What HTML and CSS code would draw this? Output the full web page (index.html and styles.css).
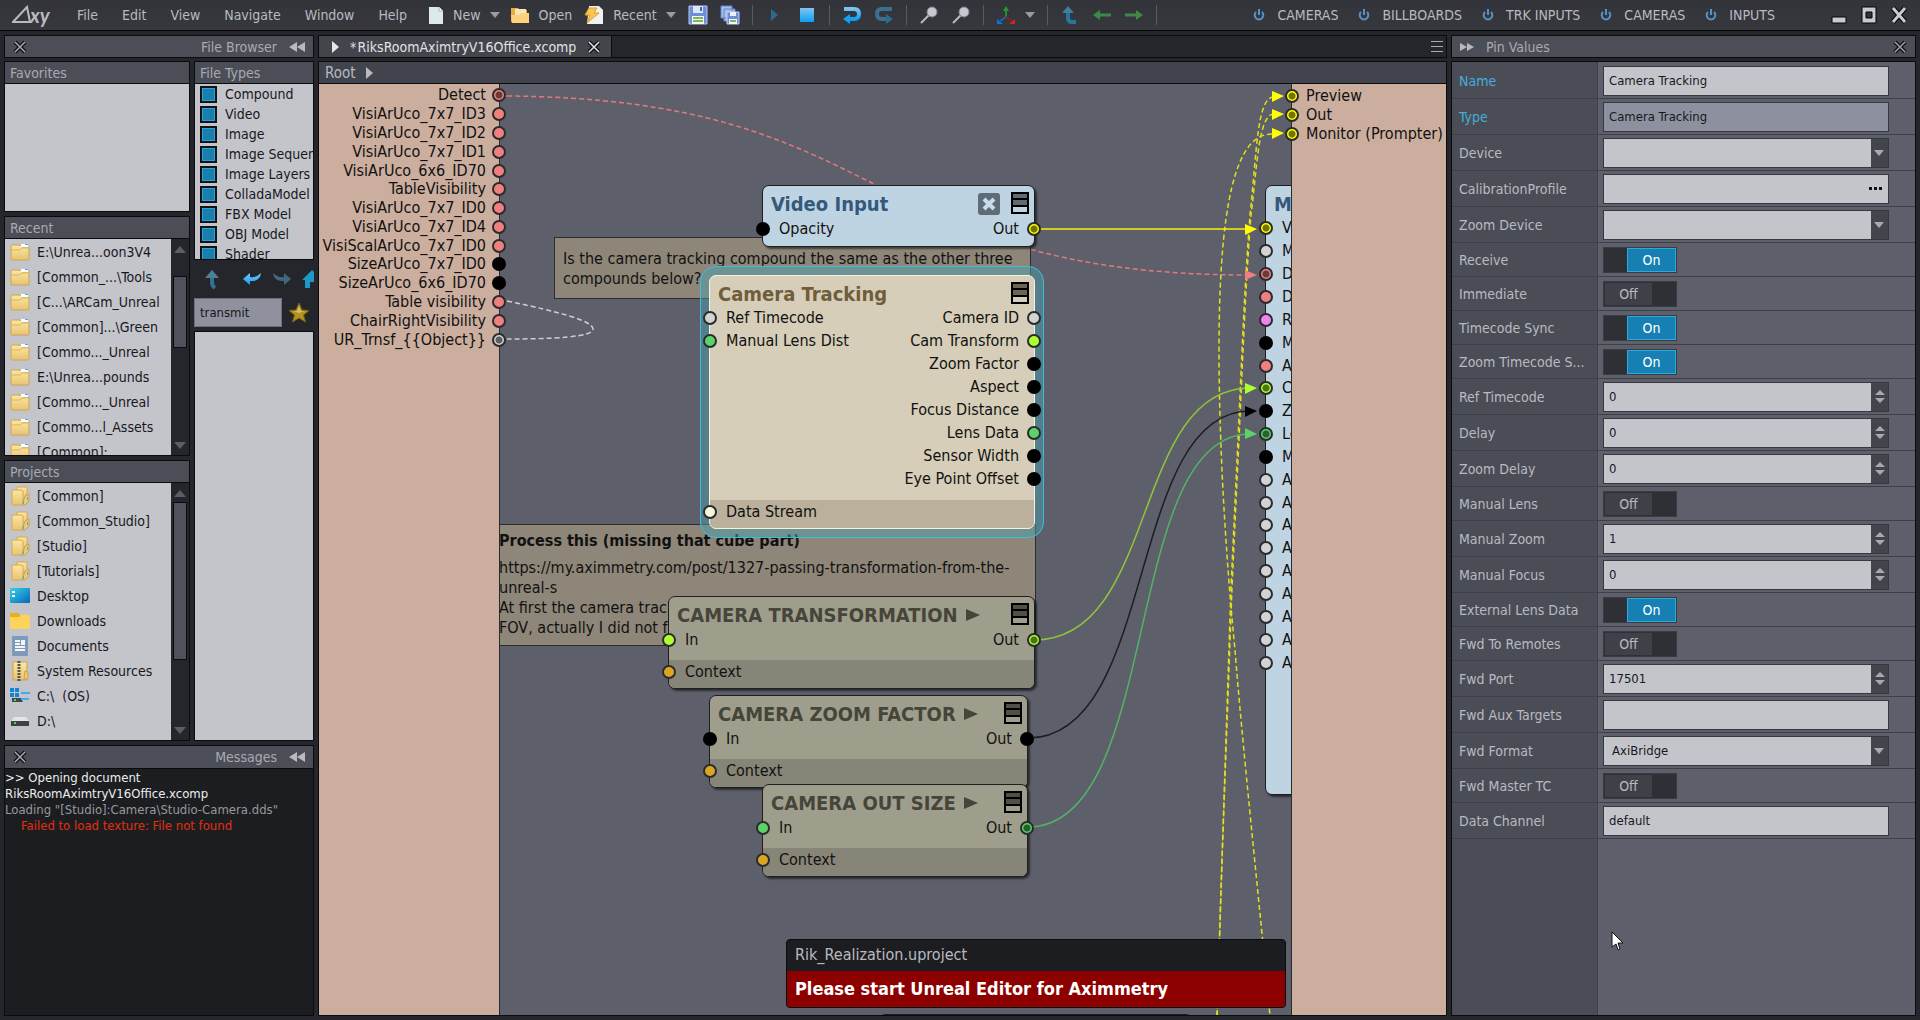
FILE: index.html
```html
<!DOCTYPE html>
<html lang="en">
<head>
<meta charset="utf-8">
<title>RiksRoomAximtryV16Office.xcomp</title>
<link rel="stylesheet" href="styles.css">
</head>
<body>
<svg class="defs" aria-hidden="true">
  <defs>
    <linearGradient id="gold" x1="0" y1="0" x2="0" y2="1"><stop offset="0" stop-color="#fbe7a0"/><stop offset="1" stop-color="#e8c374"/></linearGradient>
    <linearGradient id="blue" x1="0" y1="0" x2="0" y2="1"><stop offset="0" stop-color="#7fc4f2"/><stop offset="1" stop-color="#0ba0f4"/></linearGradient>
    <linearGradient id="desk" x1="0" y1="0" x2="1" y2="1"><stop offset="0" stop-color="#35d3e8"/><stop offset="1" stop-color="#0866bb"/></linearGradient>
  </defs>
  <symbol id="folder" viewBox="0 0 20 18"><path d="M1 3q0-1 1-1h8l2 2h6q1 0 1 1v11q0 1-1 1H2q-1 0-1-1z" fill="url(#gold)" stroke="#cda453"/><path d="M11 1h7v3h-7z" fill="#fff"/><path d="M15 1h3v1h-3z" fill="#37b7e0"/><path d="M1 7h9l2-2h7" fill="none" stroke="#d9b566"/></symbol>
  <symbol id="folders" viewBox="0 0 20 20"><path d="M7 1h10v12H7z" fill="url(#gold)" stroke="#d6a850"/><path d="M2 4h9l2 1v13l-2 1H2z" fill="url(#gold)" stroke="#d6a850"/><path d="M15 10l4-2v7l-4 4h-3z" fill="#ecc877" stroke="#cfa14a"/><path d="M17 11h1v3h-1zM13 15h1v3h-1z" fill="#3cb8dd"/></symbol>
  <symbol id="power" viewBox="0 0 12 14"><path d="M3 4a4.300 4.300 0 1 0 6 0M6 1v6" fill="none" stroke="#5592c8" stroke-width="2"/></symbol>
  <symbol id="menuicon" viewBox="0 0 18 22"><path d="M1 1h16v13H1z" fill="currentColor"/><path d="M1 1h16v20H1zM1 7h16M1 14h16" fill="none" stroke="#000" stroke-width="2"/></symbol>
  <symbol id="cross" viewBox="0 0 14 14"><path d="M2 2l10 10M12 2L2 12" stroke="#101114" stroke-width="4"/><path d="M2 2l10 10M12 2L2 12" stroke="currentColor" stroke-width="1.500"/></symbol>
  <symbol id="lens" viewBox="0 0 20 20"><path d="M2 18l8-8" stroke="#b9bbc0" stroke-width="2"/><circle cx="13" cy="7" r="5" fill="#c3c9d3" stroke="#7d828c"/></symbol>
</svg>

<header class="topbar">
  <span class="logo"><svg width="20" height="20" viewBox="0 0 20 20"><path d="M1 17L15 2l3 15z" fill="none" stroke="#b9bac0" stroke-width="2"/></svg><i>xy</i></span>
  <nav class="menus"><button>File</button><button>Edit</button><button>View</button><button>Navigate</button><button>Window</button><button>Help</button></nav>
  <div class="tools">
    <button class="tool new"><svg width="16" height="19" viewBox="0 0 16 19"><path d="M1 1h10l4 4v13H1z" fill="#dcebea"/><path d="M11 1v4h4" fill="#fff" stroke="#9fb8b5"/></svg>New<b class="tri"></b></button>
    <button class="tool open"><svg width="20" height="18" viewBox="0 0 20 18"><path d="M1 2h7l2 2h7v12H1z" fill="#e9aa44"/><path d="M5 3h11v8H5z" fill="#f6e6bb"/><path d="M1 9h8l2-2h8v10H2z" fill="#fcd27c"/></svg>Open</button>
    <button class="tool recent"><svg width="20" height="20" viewBox="0 0 20 20"><path d="M5 1h10l4 4v14H3z" fill="#f1f1ee"/><path d="M5 3h8l-3 5h5L3 18l3-8H1z" fill="#f7c653" stroke="#de9f2a"/></svg>Recent<b class="tri"></b></button>
    <button class="tool save" aria-label="Save"><svg width="20" height="20" viewBox="0 0 20 20"><path d="M1 1h18v18H1z" fill="#6a8fdc" stroke="#b7c9f3"/><path d="M5 1h10v7H5z" fill="#dfe7f7"/><path d="M12 2h2v4h-2z" fill="#4366b5"/><path d="M4 11h12v8H4z" fill="#f4f8f4"/><path d="M5 13h10M5 16h10" stroke="#7cb95a" stroke-width="2"/></svg></button>
    <button class="tool saveall" aria-label="Save all"><svg width="20" height="20" viewBox="0 0 20 20"><path d="M1 1h11v12H1zM4 4h11v12H4z" fill="#a9c0ec" stroke="#6384c4"/><path d="M7 7h12v12H7z" fill="#6a8fdc" stroke="#c4d2f4"/><path d="M10 7h6v4h-6z" fill="#eef"/><path d="M9 14h8v5H9z" fill="#f4f8f4"/><path d="M10 16h6" stroke="#7cb95a" stroke-width="2"/></svg></button>
    <i class="sep"></i>
    <button class="tool" aria-label="Play"><svg width="20" height="16" viewBox="0 0 20 16"><path d="M6 2l7 6-7 6z" fill="#2b6a94"/></svg></button>
    <button class="tool" aria-label="Stop"><svg width="20" height="16" viewBox="0 0 20 16"><path d="M3 1h14v14H3z" fill="url(#blue)"/></svg></button>
    <i class="sep"></i>
    <button class="tool" aria-label="Undo"><svg width="20" height="18" viewBox="0 0 20 18"><path d="M2 3h10q5 0 5 5t-5 5H7" fill="none" stroke="url(#blue)" stroke-width="4"/><path d="M1 13l7-5v10z" fill="#12a2f2"/></svg></button>
    <button class="tool" aria-label="Redo"><svg width="20" height="18" viewBox="0 0 20 18"><path d="M18 3H8Q3 3 3 8t5 5h5" fill="none" stroke="#3d6f90" stroke-width="4"/><path d="M19 13l-7-5v10z" fill="#2d6c92"/></svg></button>
    <i class="sep"></i>
    <button class="tool" aria-label="Zoom in"><svg width="20" height="20"><use href="#lens"/></svg></button>
    <button class="tool" aria-label="Zoom out"><svg width="20" height="20"><use href="#lens"/></svg></button>
    <i class="sep"></i>
    <button class="tool axis" aria-label="Axes"><svg width="20" height="20" viewBox="0 0 20 20"><path d="M10 12V5" stroke="#1c8f2d" stroke-width="2"/><path d="M7 6l3-5 3 5z" fill="#1f9c31"/><path d="M10 12l-6 4" stroke="#1b63b8" stroke-width="2"/><path d="M1 14v5h6z" fill="#0f75cf"/><path d="M10 12l6 4" stroke="#8a2028" stroke-width="2"/><path d="M19 14v5h-6z" fill="#d3202c"/></svg><b class="tri"></b></button>
    <i class="sep"></i>
    <button class="tool" aria-label="Up"><svg width="20" height="20" viewBox="0 0 20 20"><path d="M8 6v7q0 4 4 4h4" fill="none" stroke="#25759d" stroke-width="4"/><path d="M2 8l6-7 6 7z" fill="#3f7f9f"/></svg></button>
    <button class="tool" aria-label="Back"><svg width="20" height="16" viewBox="0 0 20 16"><path d="M19 8H7" stroke="#3c8a46" stroke-width="3"/><path d="M1 8l7-5v10z" fill="#3c8a46"/></svg></button>
    <button class="tool" aria-label="Forward"><svg width="20" height="16" viewBox="0 0 20 16"><path d="M1 8h12" stroke="#3c8a46" stroke-width="3"/><path d="M19 8l-7-5v10z" fill="#3c8a46"/></svg></button>
    <i class="sep"></i>
  </div>
  <div class="shortcuts">
    <button><svg width="12" height="14"><use href="#power"/></svg>CAMERAS</button>
    <button><svg width="12" height="14"><use href="#power"/></svg>BILLBOARDS</button>
    <button><svg width="12" height="14"><use href="#power"/></svg>TRK INPUTS</button>
    <button><svg width="12" height="14"><use href="#power"/></svg>CAMERAS</button>
    <button><svg width="12" height="14"><use href="#power"/></svg>INPUTS</button>
  </div>
  <div class="winctl">
    <button aria-label="Minimize"><svg width="16" height="18" viewBox="0 0 16 18"><path d="M1 11h14v6H1z" fill="#c9cacd" stroke="#050505"/></svg></button>
    <button aria-label="Maximize"><svg width="16" height="18" viewBox="0 0 16 18"><path d="M1 1h14v16H1z" fill="#c9cacd" stroke="#050505"/><path d="M5 6h6v6H5z" fill="#333" stroke="#050505"/></svg></button>
    <button aria-label="Close"><svg width="16" height="18" viewBox="0 0 16 18"><path d="M2 2l12 14M14 2L2 16" stroke="#050505" stroke-width="5"/><path d="M2 2l12 14M14 2L2 16" stroke="#c9cacd" stroke-width="3"/></svg></button>
  </div>
</header>

<main class="workspace">
  <aside class="dock left">
    <div class="bar"><svg width="14" height="14"><use href="#cross"/></svg><span class="push">File Browser</span><svg class="chev" width="16" height="10" viewBox="0 0 16 10"><path d="M8 0v10L0 5zM16 0v10L8 5z" fill="#b9bac0"/></svg></div>
    <div class="files">
      <div class="col">
        <section class="panel"><h2>Favorites</h2><div class="list"></div></section>
        <section class="panel"><h2>Recent</h2>
          <div class="scroller"><ul class="list">
            <li><svg width="20" height="18"><use href="#folder"/></svg>E:\Unrea...oon3V4</li>
            <li><svg width="20" height="18"><use href="#folder"/></svg>[Common_...\Tools</li>
            <li><svg width="20" height="18"><use href="#folder"/></svg>[C...\ARCam_Unreal</li>
            <li><svg width="20" height="18"><use href="#folder"/></svg>[Common]...\Green</li>
            <li><svg width="20" height="18"><use href="#folder"/></svg>[Commo..._Unreal</li>
            <li><svg width="20" height="18"><use href="#folder"/></svg>E:\Unrea...pounds</li>
            <li><svg width="20" height="18"><use href="#folder"/></svg>[Commo..._Unreal</li>
            <li><svg width="20" height="18"><use href="#folder"/></svg>[Commo...l_Assets</li>
            <li><svg width="20" height="18"><use href="#folder"/></svg>[Common]:</li>
          </ul><div class="track recent-track"><b class="up"></b><i></i><b class="down"></b></div></div>
        </section>
        <section class="panel"><h2>Projects</h2>
          <div class="scroller"><ul class="list">
            <li><svg width="20" height="20"><use href="#folders"/></svg>[Common]</li>
            <li><svg width="20" height="20"><use href="#folders"/></svg>[Common_Studio]</li>
            <li><svg width="20" height="20"><use href="#folders"/></svg>[Studio]</li>
            <li><svg width="20" height="20"><use href="#folders"/></svg>[Tutorials]</li>
            <li><svg width="20" height="16" viewBox="0 0 20 16"><rect width="20" height="15" rx="1" fill="url(#desk)"/><path d="M2 3h3v2H2zM2 7h3v2H2z" fill="#fff"/></svg>Desktop</li>
            <li><svg width="20" height="16" viewBox="0 0 20 16"><path d="M0 1q0-1 1-1h7l2 2v4H0z" fill="#f0ac12"/><path d="M0 4h9l2-2h8q1 0 1 1v12q0 1-1 1H1q-1 0-1-1z" fill="#fdd35c"/></svg>Downloads</li>
            <li><svg width="20" height="20" viewBox="0 0 20 20"><rect x="2" width="16" height="20" rx="1" fill="#7d9ab8"/><path d="M5 5h5M5 8h5M5 11h10M5 14h10" stroke="#f2f6fa" stroke-width="2"/><path d="M11 4h4v5h-4z" fill="#f2f6fa"/></svg>Documents</li>
            <li><svg width="20" height="20" viewBox="0 0 20 20"><path d="M3 1h14v18H3z" fill="url(#gold)" stroke="#cfa14a"/><path d="M9 0v20" stroke="#555" stroke-width="3" stroke-dasharray="2 1"/><path d="M15 10l3 1v7h-4z" fill="#ecc877" stroke="#cfa14a"/></svg>System Resources</li>
            <li><svg width="20" height="18" viewBox="0 0 20 18"><path d="M2 11h15v4H2z" fill="#43464a"/><path d="M0 1h4v4H0zM5 1h4v4H5zM0 6h4v4H0zM5 6h4v4H5z" fill="#1384d8"/><path d="M4 12h2v2H4z" fill="#52d552"/><path d="M11 3h8v7q-1 5-4 7-3-2-4-7z" fill="#b9c6d4"/><path d="M11 6h9M11 12h8" stroke="#4ea8e4" stroke-width="2"/></svg>C:\ &nbsp;(OS)</li>
            <li><svg width="20" height="18" viewBox="0 0 20 18"><path d="M4 5h12l3 4H1z" fill="#e3e4e6"/><path d="M1 9h18v5H1z" fill="#3e4144"/><path d="M4 10h2v2H4z" fill="#52d552"/></svg>D:\</li>
            <li><svg width="20" height="18"></svg>Libraries</li>
          </ul><div class="track proj-track"><b class="up"></b><i></i><b class="down"></b></div></div>
        </section>
      </div>
      <div class="col2">
        <section class="panel types"><h2>File Types</h2><div class="list checks">
          <label><input type="checkbox" checked>Compound</label><label><input type="checkbox" checked>Video</label><label><input type="checkbox" checked>Image</label><label><input type="checkbox" checked>Image Sequence</label><label><input type="checkbox" checked>Image Layers</label><label><input type="checkbox" checked>ColladaModel</label><label><input type="checkbox" checked>FBX Model</label><label><input type="checkbox" checked>OBJ Model</label><label><input type="checkbox" checked>Shader</label>
        </div></section>
        <div class="navicons">
          <button aria-label="Up"><svg width="20" height="20" viewBox="0 0 20 20"><path d="M10 7v6q0 4 3 6" fill="none" stroke="#2f7292" stroke-width="4"/><path d="M3 9l7-8 7 8z" fill="#4f7f97"/></svg></button>
          <button aria-label="Back"><svg width="20" height="16" viewBox="0 0 20 16"><path d="M1 8l7-6v4q6 1 11-4-1 9-11 8v4z" fill="url(#blue)"/></svg></button>
          <button aria-label="Forward"><svg width="20" height="16" viewBox="0 0 20 16"><path d="M19 8l-7-6v4Q6 7 1 2q1 9 11 8v4z" fill="#41677f"/></svg></button>
          <button aria-label="Home"><svg width="20" height="20" viewBox="0 0 20 20"><path d="M10 1L0 11h3v8h5v-6h4v6h5v-8h3z" fill="#1a9ac4"/></svg></button>
        </div>
        <div class="search"><input type="text" value="transmit" aria-label="Search"><button aria-label="Favorite"><svg width="20" height="20" viewBox="0 0 20 20"><path d="M10 0l3 7 7 .5-5.500 4.500 2 7L10 15l-6.500 4 2-7L0 7.500 7 7z" fill="#b3921e" stroke="#7c6414"/><path d="M10 3l2 5h4l-6 2-6-2h4z" fill="#d3bd6c"/></svg></button></div>
        <div class="results"></div>
      </div>
    </div>
    <section class="messages">
      <div class="bar"><svg width="14" height="14"><use href="#cross"/></svg><span class="push">Messages</span><svg class="chev" width="16" height="10" viewBox="0 0 16 10"><path d="M8 0v10L0 5zM16 0v10L8 5z" fill="#b9bac0"/></svg></div>
      <div class="log"><p>&gt;&gt; Opening document</p><p>RiksRoomAximtryV16Office.xcomp</p><p class="dim">Loading "[Studio]:Camera\Studio-Camera.dds"</p><p class="err">Failed to load texture: File not found</p></div>
    </section>
  </aside>

  <section class="center">
    <div class="tabs"><div class="tab"><b class="play"></b><span>*&#8202;RiksRoomAximtryV16Office.xcomp</span><svg width="14" height="14"><use href="#cross"/></svg></div><button class="burger" aria-label="Tabs"><i></i><i></i><i></i></button></div>
    <div class="editor">
      <div class="crumb">Root<b class="play"></b></div>
      <div class="canvas">
        <svg class="wires" width="1129" height="931" viewBox="319 84 1129 931" fill="none">
          <path d="M507 96H499C899 96 856 275 1250 275" stroke="#e07a7c" stroke-width="1.500" stroke-dasharray="5 3"/>
          <path d="M507 301C560 312 593 321 593 329S555 339 507 339" stroke="#cfcfcf" stroke-width="1.500" stroke-dasharray="5 3"/>
          <g stroke="#e0e01c" stroke-width="1.500" stroke-dasharray="5 3">
            <path d="M1274 97C1257 97 1257 150 1250 215C1244 290 1240 400 1237 460L1231 587L1222 860L1217 1016"/>
            <path d="M1274 114C1258 114 1257 170 1251 215C1245 290 1241 400 1238 460L1232 587L1222 860L1217 1016"/>
            <path d="M1272 134C1245 134 1219 170 1219 350C1219 460 1228 580 1235 650C1242 740 1258 890 1270 1016"/>
          </g>
          <path d="M1034 229H1250" stroke="#f4f400" stroke-width="1.500"/>
          <path d="M1034 640C1159 640 1131 388 1250 388" stroke="#8fc43a" stroke-width="1.500"/>
          <path d="M1028 738C1158 738 1126 411 1250 411" stroke="#1c1d20" stroke-width="1.500"/>
          <path d="M1028 827C1163 827 1121 434 1250 434" stroke="#55b166" stroke-width="1.500"/>
          <path d="M1245 224v11l12-6zM1272 91v11l12-6zM1272 109v11l12-6zM1272 128v11l12-6z" fill="#ffff00"/>
          <path d="M1245 270v10l12-5z" fill="#f08080"/><path d="M1245 383v11l12-6z" fill="#adff2f"/><path d="M1245 406v11l12-6z" fill="#000"/><path d="M1245 428v11l12-5z" fill="#5ad469"/>
        </svg>
        <div class="note note1">Is the camera tracking compound the same as the other three compounds below?</div>
        <div class="note note2"><strong>Process this (missing that cube part)</strong><p>https://my.aximmetry.com/post/1327-passing-transformation-from-the-unreal-s</p><p>At first the camera track</p><p>FOV, actually I did not f</p></div>

        <article class="node sky video"><h3>Video Input<button class="xbox" aria-label="Disable"><svg width="22" height="22" viewBox="0 0 22 22"><rect width="22" height="22" rx="3" fill="#5f6b76"/><path d="M6 6l10 10M16 6L6 16" stroke="#c8dbe8" stroke-width="4"/></svg></button><svg class="mi" width="18" height="22"><use href="#menuicon"/></svg></h3>
          <div class="pins"><div class="row"><i class="pin k"></i>Opacity<span>Out</span><i class="pin y on"></i></div></div></article>

        <article class="node sand tracking"><h3>Camera Tracking<svg class="mi" width="18" height="22"><use href="#menuicon"/></svg></h3>
          <div class="pins">
            <div class="row"><i class="pin w"></i>Ref Timecode<span>Camera ID</span><i class="pin w"></i></div>
            <div class="row"><i class="pin g"></i>Manual Lens Dist<span>Cam Transform</span><i class="pin l"></i></div>
            <div class="row"><span>Zoom Factor</span><i class="pin k"></i></div>
            <div class="row"><span>Aspect</span><i class="pin k"></i></div>
            <div class="row"><span>Focus Distance</span><i class="pin k"></i></div>
            <div class="row"><span>Lens Data</span><i class="pin g"></i></div>
            <div class="row"><span>Sensor Width</span><i class="pin k"></i></div>
            <div class="row"><span>Eye Point Offset</span><i class="pin k"></i></div>
          </div><footer class="row"><i class="pin c"></i>Data Stream</footer></article>

        <article class="node olive transf"><h3>CAMERA TRANSFORMATION<b class="play"></b><svg class="mi" width="18" height="22"><use href="#menuicon"/></svg></h3><div class="pins"><div class="row"><i class="pin l"></i>In<span>Out</span><i class="pin l on"></i></div></div><footer class="row"><i class="pin o"></i>Context</footer></article>
        <article class="node olive zoomf"><h3>CAMERA ZOOM FACTOR<b class="play"></b><svg class="mi" width="18" height="22"><use href="#menuicon"/></svg></h3><div class="pins"><div class="row"><i class="pin k"></i>In<span>Out</span><i class="pin k"></i></div></div><footer class="row"><i class="pin o"></i>Context</footer></article>
        <article class="node olive outsize"><h3>CAMERA OUT SIZE<b class="play"></b><svg class="mi" width="18" height="22"><use href="#menuicon"/></svg></h3><div class="pins"><div class="row"><i class="pin g"></i>In<span>Out</span><i class="pin g on"></i></div></div><footer class="row"><i class="pin o"></i>Context</footer></article>

        <article class="node sky mixer"><h3>Mixer</h3><div class="pins">
          <div class="row"><i class="pin y on"></i>Video</div><div class="row"><i class="pin w"></i>Mode</div><div class="row"><i class="pin r on"></i>Detect</div><div class="row"><i class="pin r"></i>Detect</div><div class="row"><i class="pin v"></i>Record</div><div class="row"><i class="pin k"></i>Mode</div><div class="row"><i class="pin r"></i>Apply</div><div class="row"><i class="pin l on"></i>Camera</div><div class="row"><i class="pin k"></i>Zoom</div><div class="row"><i class="pin g on"></i>Lens</div><div class="row"><i class="pin k"></i>Mode</div><div class="row"><i class="pin w"></i>Area</div><div class="row"><i class="pin w"></i>Area</div><div class="row"><i class="pin w"></i>Area</div><div class="row"><i class="pin w"></i>Area</div><div class="row"><i class="pin w"></i>Area</div><div class="row"><i class="pin w"></i>Area</div><div class="row"><i class="pin w"></i>Area</div><div class="row"><i class="pin w"></i>Area</div><div class="row"><i class="pin w"></i>Area</div>
        </div></article>
        <article class="node olive below"></article>

        <div class="strip inputs"><div class="pins">
          <div class="row"><span>Detect</span><i class="pin r on"></i></div><div class="row"><span>VisiArUco_7x7_ID3</span><i class="pin r"></i></div><div class="row"><span>VisiArUco_7x7_ID2</span><i class="pin r"></i></div><div class="row"><span>VisiArUco_7x7_ID1</span><i class="pin r"></i></div><div class="row"><span>VisiArUco_6x6_ID70</span><i class="pin r"></i></div><div class="row"><span>TableVisibility</span><i class="pin r"></i></div><div class="row"><span>VisiArUco_7x7_ID0</span><i class="pin r"></i></div><div class="row"><span>VisiArUco_7x7_ID4</span><i class="pin r"></i></div><div class="row"><span>VisiScalArUco_7x7_ID0</span><i class="pin r"></i></div><div class="row"><span>SizeArUco_7x7_ID0</span><i class="pin k"></i></div><div class="row"><span>SizeArUco_6x6_ID70</span><i class="pin k"></i></div><div class="row"><span>Table visibility</span><i class="pin r"></i></div><div class="row"><span>ChairRightVisibility</span><i class="pin r"></i></div><div class="row"><span>UR_Trnsf_{{Object}}</span><i class="pin w on"></i></div>
        </div></div>
        <div class="strip outputs"><div class="pins"><div class="row"><i class="pin y on"></i>Preview</div><div class="row"><i class="pin y on"></i>Out</div><div class="row"><i class="pin y on"></i>Monitor (Prompter)</div></div></div>
        <div class="toast" role="alert"><p>Rik_Realization.uproject</p><strong>Please start Unreal Editor for Aximmetry</strong></div>
      </div>
    </div>
  </section>

  <aside class="dock right">
    <div class="bar"><svg class="chev" width="14" height="10" viewBox="0 0 14 10"><path d="M0 1v8l7-4zM7 1v8l7-4z" fill="#b9bac0"/></svg><span>Pin Values</span><svg class="push dimx" width="14" height="14"><use href="#cross"/></svg></div>
    <form class="props">
      <div class="prop"><label class="hl" for="p1">Name</label><div><input id="p1" type="text" value="Camera Tracking"></div></div>
      <div class="prop"><label class="hl" for="p2">Type</label><div><input id="p2" class="ro" type="text" value="Camera Tracking" readonly></div></div>
      <div class="prop"><label for="p3">Device</label><div><span class="sel"><select id="p3"><option></option></select></span></div></div>
      <div class="prop"><label for="p4">CalibrationProfile</label><div><span class="pick"><input id="p4" type="text"><button type="button" aria-label="Browse"><i></i><i></i><i></i></button></span></div></div>
      <div class="prop"><label for="p5">Zoom Device</label><div><span class="sel"><select id="p5"><option></option></select></span></div></div>
      <div class="prop short"><label for="p6">Receive</label><div><span class="toggle"><input id="p6" type="checkbox" checked><em>On</em></span></div></div>
      <div class="prop short"><label for="p7">Immediate</label><div><span class="toggle"><input id="p7" type="checkbox"><em>Off</em></span></div></div>
      <div class="prop short"><label for="p8">Timecode Sync</label><div><span class="toggle"><input id="p8" type="checkbox" checked><em>On</em></span></div></div>
      <div class="prop short"><label for="p9">Zoom Timecode S...</label><div><span class="toggle"><input id="p9" type="checkbox" checked><em>On</em></span></div></div>
      <div class="prop"><label for="p10">Ref Timecode</label><div><span class="spin"><input id="p10" type="text" value="0"><i></i></span></div></div>
      <div class="prop"><label for="p11">Delay</label><div><span class="spin"><input id="p11" type="text" value="0"><i></i></span></div></div>
      <div class="prop"><label for="p12">Zoom Delay</label><div><span class="spin"><input id="p12" type="text" value="0"><i></i></span></div></div>
      <div class="prop short"><label for="p13">Manual Lens</label><div><span class="toggle"><input id="p13" type="checkbox"><em>Off</em></span></div></div>
      <div class="prop"><label for="p14">Manual Zoom</label><div><span class="spin"><input id="p14" type="text" value="1"><i></i></span></div></div>
      <div class="prop"><label for="p15">Manual Focus</label><div><span class="spin"><input id="p15" type="text" value="0"><i></i></span></div></div>
      <div class="prop short"><label for="p16">External Lens Data</label><div><span class="toggle"><input id="p16" type="checkbox" checked><em>On</em></span></div></div>
      <div class="prop short"><label for="p17">Fwd To Remotes</label><div><span class="toggle"><input id="p17" type="checkbox"><em>Off</em></span></div></div>
      <div class="prop"><label for="p18">Fwd Port</label><div><span class="spin"><input id="p18" type="text" value="17501"><i></i></span></div></div>
      <div class="prop"><label for="p19">Fwd Aux Targets</label><div><input id="p19" type="text"></div></div>
      <div class="prop"><label for="p20">Fwd Format</label><div><span class="sel"><select id="p20"><option>AxiBridge</option></select></span></div></div>
      <div class="prop short"><label for="p21">Fwd Master TC</label><div><span class="toggle"><input id="p21" type="checkbox"><em>Off</em></span></div></div>
      <div class="prop"><label for="p22">Data Channel</label><div><input id="p22" type="text" value="default"></div></div>
      <svg class="cursor" width="13" height="20" viewBox="0 0 13 20"><path d="M1 1v15l4-3 2 6 2-1-2-6h5z" fill="#fff" stroke="#111"/></svg>
    </form>
  </aside>
</main>
</body>
</html>
```
FILE: styles.css
```css
* { box-sizing: border-box; }
body {
  margin: 0; height: 100vh; display: flex; flex-direction: column; overflow: hidden;
  background: #25262b; color: #b9bac0;
  font: 14px/16px "DejaVu Sans Condensed", "DejaVu Sans", sans-serif;
}
button { background: none; border: 0; padding: 0; color: inherit; font: inherit; display: flex; align-items: center; }
h2, h3, p, ul { margin: 0; padding: 0; list-style: none; font-weight: normal; }
svg { flex: none; display: block; }
.defs { position: absolute; width: 0; height: 0; }
.tri { border: 5px solid transparent; border-top: 6px solid #9a9ba1; border-bottom: 0; width: 0; }
.play { border: 6px solid transparent; border-left: 7px solid #e6e6e8; border-right: 0; width: 0; }

/* top bar */
.topbar { height: 31px; flex: none; display: flex; align-items: center; padding: 0 13px 0 12px; background: linear-gradient(#33343a, #37383d); border-bottom: 1px solid #050506; white-space: nowrap; }
.logo { display: flex; align-items: center; width: 65px; font: bold 20px/20px "Lato", sans-serif; }
.logo svg { margin-right: -2px; }
.menus { display: flex; gap: 24px; }
.tools { display: flex; align-items: center; gap: 12px; margin-left: 21px; }
.tool { gap: 9px; }
.tool.open { margin-left: -2px; }
.sep { width: 1px; height: 20px; background: #5a5b61; }
.shortcuts { display: flex; gap: 20px; margin-left: auto; }
.shortcuts button { gap: 12px; }
.winctl { display: flex; gap: 14px; margin-left: 56px; }

/* workspace */
.workspace { flex: 1; min-height: 0; display: flex; gap: 4px; padding: 4px; }
.dock { flex: none; display: flex; flex-direction: column; gap: 3px; }
.left { width: 310px; }
.right { width: 465px; }
.bar { height: 23px; flex: none; display: flex; align-items: center; gap: 12px; padding: 0 8px; border: 1px solid #0a0b0c; background: #4c4e57; color: #a9aab0; }
.push { margin-left: auto; }
.dimx { color: #a0a1a8; }

.files { flex: 1; min-height: 0; display: grid; grid-template-columns: 186px 1fr; gap: 4px; }
.col { min-height: 0; display: grid; grid-template-rows: 151px 240px 1fr; gap: 4px; }
.panel { min-height: 0; display: flex; flex-direction: column; border: 1px solid #0a0b0c; overflow: hidden; }
.panel h2 { height: 22px; flex: none; padding: 2px 5px; background: #4c4e57; border-bottom: 1px solid #0a0b0c; font-size: 14px; color: #a9aab0; line-height: 18px; }
.list { flex: 1; min-width: 0; background: #c4c5cb; color: #17181c; overflow: hidden; }
.list li { height: 25px; display: flex; align-items: center; gap: 7px; padding-left: 5px; white-space: nowrap; }
.scroller { flex: 1; min-height: 0; display: flex; }
.track { width: 18px; display: flex; flex-direction: column; align-items: center; padding: 7px 0 6px; background: #25262b; }
.track b { border: 6px solid transparent; width: 0; }
.track .up { border-top: 0; border-bottom: 7px solid #5c5d69; }
.track .down { border-bottom: 0; border-top: 7px solid #5c5d69; margin-top: auto; }
.track i { width: 14px; background: #50515c; border: 1px solid #0a0b0c; margin-top: 23px; height: 72px; }
.track.proj-track i { margin-top: 5px; height: 158px; }

.col2 { min-width: 0; min-height: 0; display: flex; flex-direction: column; }
.types { height: 199px; flex: none; }
.checks label { display: flex; align-items: center; gap: 8px; height: 20px; padding-left: 5px; white-space: nowrap; }
.checks input { appearance: none; flex: none; margin: 0; width: 17px; height: 17px; border: 2px solid #111317; background: #187fae; box-shadow: inset 0 0 0 1px #2ba3d6; }
.navicons { height: 38px; flex: none; display: flex; gap: 10px; padding-left: 8px; overflow: hidden; }
.navicons button:nth-child(2) { margin-left: 10px; }
.search { flex: none; display: flex; gap: 7px; margin-bottom: 4px; }
.search input { width: 88px; height: 29px; border: 1px solid #6d707c; background: #8f929e; color: #15161a; font: inherit; font-size: 13px; padding: 0 5px; }
.results { flex: 1; background: #c4c5cb; border: 1px solid #0a0b0c; }

.messages { flex: 0 0 271px; display: flex; flex-direction: column; border: 1px solid #0a0b0c; background: #1c1d20; margin-top: 1px; }
.messages .bar { border-width: 0 0 1px; }
.log { font-size: 13px; line-height: 16px; color: #eee; white-space: nowrap; padding-top: 1px; overflow: hidden; }
.log .dim { color: #97989d; }
.log .err { color: #e22f0e; padding-left: 16px; }

/* centre */
.center { flex: 1; min-width: 0; display: flex; flex-direction: column; gap: 3px; }
.tabs { height: 23px; flex: none; display: flex; justify-content: space-between; border: 1px solid #0a0b0c; padding-right: 3px; }
.tab { display: flex; align-items: center; gap: 11px; padding: 0 10px 0 13px; background: #43454d; border-right: 1px solid #0a0b0c; color: #e2e2e5; white-space: nowrap; }
.burger { width: 12px; flex-direction: column; justify-content: center; gap: 4px; }
.burger i { width: 12px; height: 1px; background: #a9aab0; }
.editor { flex: 1; min-height: 0; display: flex; flex-direction: column; border: 1px solid #0a0b0c; }
.crumb { height: 22px; flex: none; display: flex; align-items: center; gap: 10px; padding-left: 6px; background: #41444c; border-bottom: 1px solid #0a0b0c; font-size: 15px; }
.crumb .play { border-left-color: #b9bac0; }
.canvas { position: relative; flex: 1; min-height: 0; overflow: hidden; background: #5d5f6b; color: #111; font-size: 16px; line-height: 18px; }
.wires { position: absolute; left: 0; top: 0; }

.note { position: absolute; background: #8e8678; border: 1px solid #2e2d2b; line-height: 20px; }
.note1 { left: 235px; top: 153px; width: 477px; height: 62px; padding: 11px 8px; }
.note2 { left: 179px; top: 440px; width: 538px; height: 122px; padding: 6px 0; overflow: hidden; }
.note2 strong { display: block; line-height: 20px; margin-bottom: 7px; }

.node { position: absolute; display: flex; flex-direction: column; border: 1px solid #1d1e20; border-radius: 7px; box-shadow: 2px 2px 2px #0008; }
.node h3 { height: 31px; flex: none; display: flex; align-items: center; gap: 8px; padding: 4px 5px 0 8px; font-size: 20px; line-height: 24px; font-weight: bold; white-space: nowrap; }
.node h3 .play { border-left-width: 14px; border-left-color: currentColor; }
.mi { margin-left: auto; margin-bottom: 1px; }
.xbox { margin-left: auto; }
.xbox + .mi { margin-left: 3px; }
.pins { display: grid; grid-auto-rows: 1fr; }
.row { display: flex; align-items: center; white-space: nowrap; }
.row span { margin-left: auto; margin-right: 8px; }
.pin { flex: none; width: 14px; height: 14px; border-radius: 50%; border: 2px solid #2a2b2c; background: var(--c); margin: 0 9px 0 -7px; }
.row span + .pin { margin: 0 -7px 0 0; }
.pin.on { background: radial-gradient(circle, color-mix(in srgb, var(--c), #000 55%) 3px, var(--c) 4px); }
.k { --c: #000; border-color: #000; } .w { --c: #d3d3d3; } .y { --c: #ffff00; } .r { --c: #f08080; } .g { --c: #5ad469; } .l { --c: #adff2f; } .c { --c: #f5f5dc; } .o { --c: #daa520; } .v { --c: #ee82ee; }
.node footer { margin-top: auto; height: 28px; padding-bottom: 4px; border-radius: 0 0 6px 6px; }

.sky { background: #bfd4e2; } .sky h3 { color: #35597c; } .sky svg { color: #5f6b76; }
.sand { background: #d6ceb8; } .sand h3 { color: #705d3b; } .sand svg { color: #6b6754; } .sand footer { background: #bab09b; }
.olive { background: #9f9e8c; } .olive h3 { color: #46453a; } .olive svg { color: #504f48; } .olive footer { background: #878577; }
.video { left: 443px; top: 101px; width: 273px; height: 62px; }
.tracking { left: 390px; top: 191px; width: 326px; height: 254px; border-color: #f4f1e6; box-shadow: 0 0 0 9px #4aa0ac80; outline: 1px solid #3fbcdc; outline-offset: 8px; }
.transf { left: 349px; top: 512px; width: 367px; height: 93px; }
.zoomf { left: 390px; top: 611px; width: 319px; height: 93px; }
.outsize { left: 443px; top: 700px; width: 266px; height: 93px; }
.mixer { left: 946px; top: 101px; width: 160px; height: 610px; }
.below { left: 559px; top: 930px; width: 315px; height: 93px; }
.node .pins { height: 23px; }
.tracking .pins { height: 183px; }
.mixer .pins { height: 457px; }
.strip { position: absolute; top: 0; bottom: 0; background: #ccae9e; }
.inputs { left: 0; width: 181px; border-right: 1px solid #2a2b2e; }
.outputs { right: 0; width: 155px; border-left: 1px solid #2a2b2e; }
.strip .pins { height: 263px; margin-top: 2px; }
.strip .row span { margin-right: 6px; }
.outputs .pins { height: 57px; }
.outputs .pin { margin-right: 7px; }

.toast { position: absolute; left: 467px; bottom: 7px; width: 500px; border: 1px solid #0a0b0c; border-radius: 4px; overflow: hidden; background: #1c1d20; color: #b9bac0; }
.toast p { padding: 6px 8px 7px; }
.toast strong { display: block; padding: 9px 8px; background: #8c0000; color: #fff; font-size: 18px; }

/* pin values */
.props { position: relative; flex: 1; min-height: 0; padding-top: 1px; overflow: hidden; border: 1px solid #0a0b0c; background: linear-gradient(90deg, #4b4d56 145px, #3e4048 145px, #3e4048 146px, #5d5f6b 146px); }
.prop { height: 36px; display: grid; grid-template-columns: 151px 1fr; align-items: center; border-bottom: 1px solid #3e4048; padding-right: 26px; }
.prop.short { height: 34px; }
.prop > label { padding-left: 7px; color: #b9bac0; white-space: nowrap; }
.prop > label.hl { color: #43aedb; }
.prop > div, .prop div > span { display: flex; }
.prop div > span { flex: 1; position: relative; }
.prop input[type=text], .prop select { flex: 1; min-width: 0; height: 30px; appearance: none; margin: 0; border: 1px solid #36383f; border-radius: 0; background: #c4c5cb; color: #17181c; font: inherit; font-size: 13px; padding: 0 5px; }
.prop select { padding: 0 8px; }
.prop input.ro { background: #8d919f; }
.sel::after { content: ""; position: absolute; right: 5px; top: 12px; border: 5px solid transparent; border-top: 6px solid #a9aab0; border-bottom: 0; }
.sel::before { content: ""; position: absolute; right: 1px; top: 1px; bottom: 1px; width: 17px; background: #43454d; }
.spin i { position: absolute; right: 1px; top: 1px; bottom: 1px; width: 17px; background: #43454d; display: flex; flex-direction: column; align-items: center; justify-content: center; gap: 3px; }
.spin i::before { content: ""; border: 5px solid transparent; border-top: 0; border-bottom: 5px solid #a9aab0; }
.spin i::after { content: ""; border: 5px solid transparent; border-bottom: 0; border-top: 5px solid #a9aab0; }
.pick button { position: absolute; right: 7px; top: 13px; gap: 2px; }
.pick i { width: 3px; height: 3px; background: #111; }
.prop div > .toggle { flex: none; width: 74px; height: 26px; background: #2f3035; border: 1px solid #3a3c43; }
.toggle input { position: absolute; inset: 0; margin: 0; opacity: 0; }
.toggle em { width: 49px; height: 24px; display: flex; align-items: center; justify-content: center; font-style: normal; background: #3f4149; border: 1px solid #2f3035; color: #b9bac0; }
.toggle :checked + em { margin-left: auto; background: #1780b2; border-color: #2fa8dc; color: #fff; }
.cursor { position: absolute; left: 159px; top: 869px; }
```
